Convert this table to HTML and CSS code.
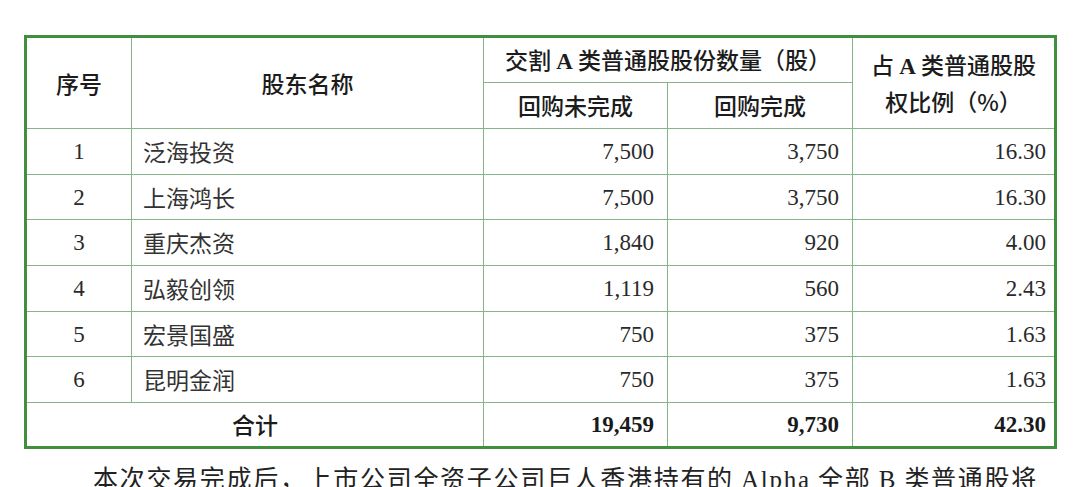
FILE: index.html
```html
<!DOCTYPE html>
<html lang="zh-CN">
<head>
<meta charset="utf-8">
<title>股东持股表</title>
<link rel="stylesheet" href="styles.css">
</head>
<body>
<div class="page">
  <div class="table">
    <div class="cell hd span-r2">序号</div>
    <div class="cell hd span-r2">股东名称</div>
    <div class="cell hd span-c2"><span>交割 <b class="lat">A</b> 类普通股股份数量（股）</span></div>
    <div class="cell hd span-r2 two-line"><span>占 <b class="lat">A</b> 类普通股股</span><span>权比例（%）</span></div>
    <div class="cell hd">回购未完成</div>
    <div class="cell hd">回购完成</div>

    <div class="cell num-c">1</div><div class="cell name">泛海投资</div><div class="cell num">7,500</div><div class="cell num">3,750</div><div class="cell num last">16.30</div>
    <div class="cell num-c">2</div><div class="cell name">上海鸿长</div><div class="cell num">7,500</div><div class="cell num">3,750</div><div class="cell num last">16.30</div>
    <div class="cell num-c">3</div><div class="cell name">重庆杰资</div><div class="cell num">1,840</div><div class="cell num">920</div><div class="cell num last">4.00</div>
    <div class="cell num-c">4</div><div class="cell name">弘毅创领</div><div class="cell num">1,119</div><div class="cell num">560</div><div class="cell num last">2.43</div>
    <div class="cell num-c">5</div><div class="cell name">宏景国盛</div><div class="cell num">750</div><div class="cell num">375</div><div class="cell num last">1.63</div>
    <div class="cell num-c">6</div><div class="cell name">昆明金润</div><div class="cell num">750</div><div class="cell num">375</div><div class="cell num last">1.63</div>

    <div class="cell hd span-c2">合计</div>
    <div class="cell num bold">19,459</div>
    <div class="cell num bold">9,730</div>
    <div class="cell num bold last">42.30</div>
  </div>
  <p class="para">本次交易完成后，上市公司全资子公司巨人香港持有的 <span class="lat">Alpha</span> 全部 <span class="lat">B</span> 类普通股将</p>
</div>
</body>
</html>
```
FILE: styles.css
```css
html, body {
  margin: 0;
  padding: 0;
  background: #ffffff;
}
body {
  width: 1080px;
  height: 487px;
  overflow: hidden;
  font-family: "Noto Sans CJK SC", "Noto Sans", sans-serif;
  color: #222;
}
.page {
  padding: 35px 0 0 24px;
}
.table {
  width: 1033px;
  box-sizing: border-box;
  border: 3px solid #3f8f3f;
  background: #86b486;
  display: grid;
  grid-template-columns: 104px 351px 183px 184px 201px;
  grid-template-rows: 44px 45px 45px 44px 45px 45px 44px 45px 43px;
  gap: 1px;
}
.cell {
  background: #fff;
  display: flex;
  align-items: center;
  font-size: 23px;
  line-height: 1;
  white-space: nowrap;
}
.hd {
  justify-content: center;
  font-weight: 500;
  color: #1c1c1c;
}
.span-r2 { grid-row: span 2; }
.span-c2 { grid-column: span 2; }
.two-line {
  flex-direction: column;
  gap: 12px;
}
.lat {
  font-family: "Liberation Serif", "Times New Roman", serif;
  font-weight: 700;
}
.num-c {
  justify-content: center;
  font-family: "Liberation Serif", "Times New Roman", serif;
  color: #2a2a2a;
}
.name {
  padding-left: 11px;
  font-weight: 400;
  color: #333;
}
.num {
  justify-content: flex-end;
  padding-right: 13px;
  font-family: "Liberation Serif", "Times New Roman", serif;
  color: #2a2a2a;
}
.num.last { padding-right: 8px; }
.bold { font-weight: 700; color: #1a1a1a; }
.para {
  margin: 11px 0 0 69px;
  font-size: 25px;
  line-height: 1.4;
  letter-spacing: 1.7px;
  color: #222;
  white-space: nowrap;
}
.para .lat { font-weight: 400; }
```
